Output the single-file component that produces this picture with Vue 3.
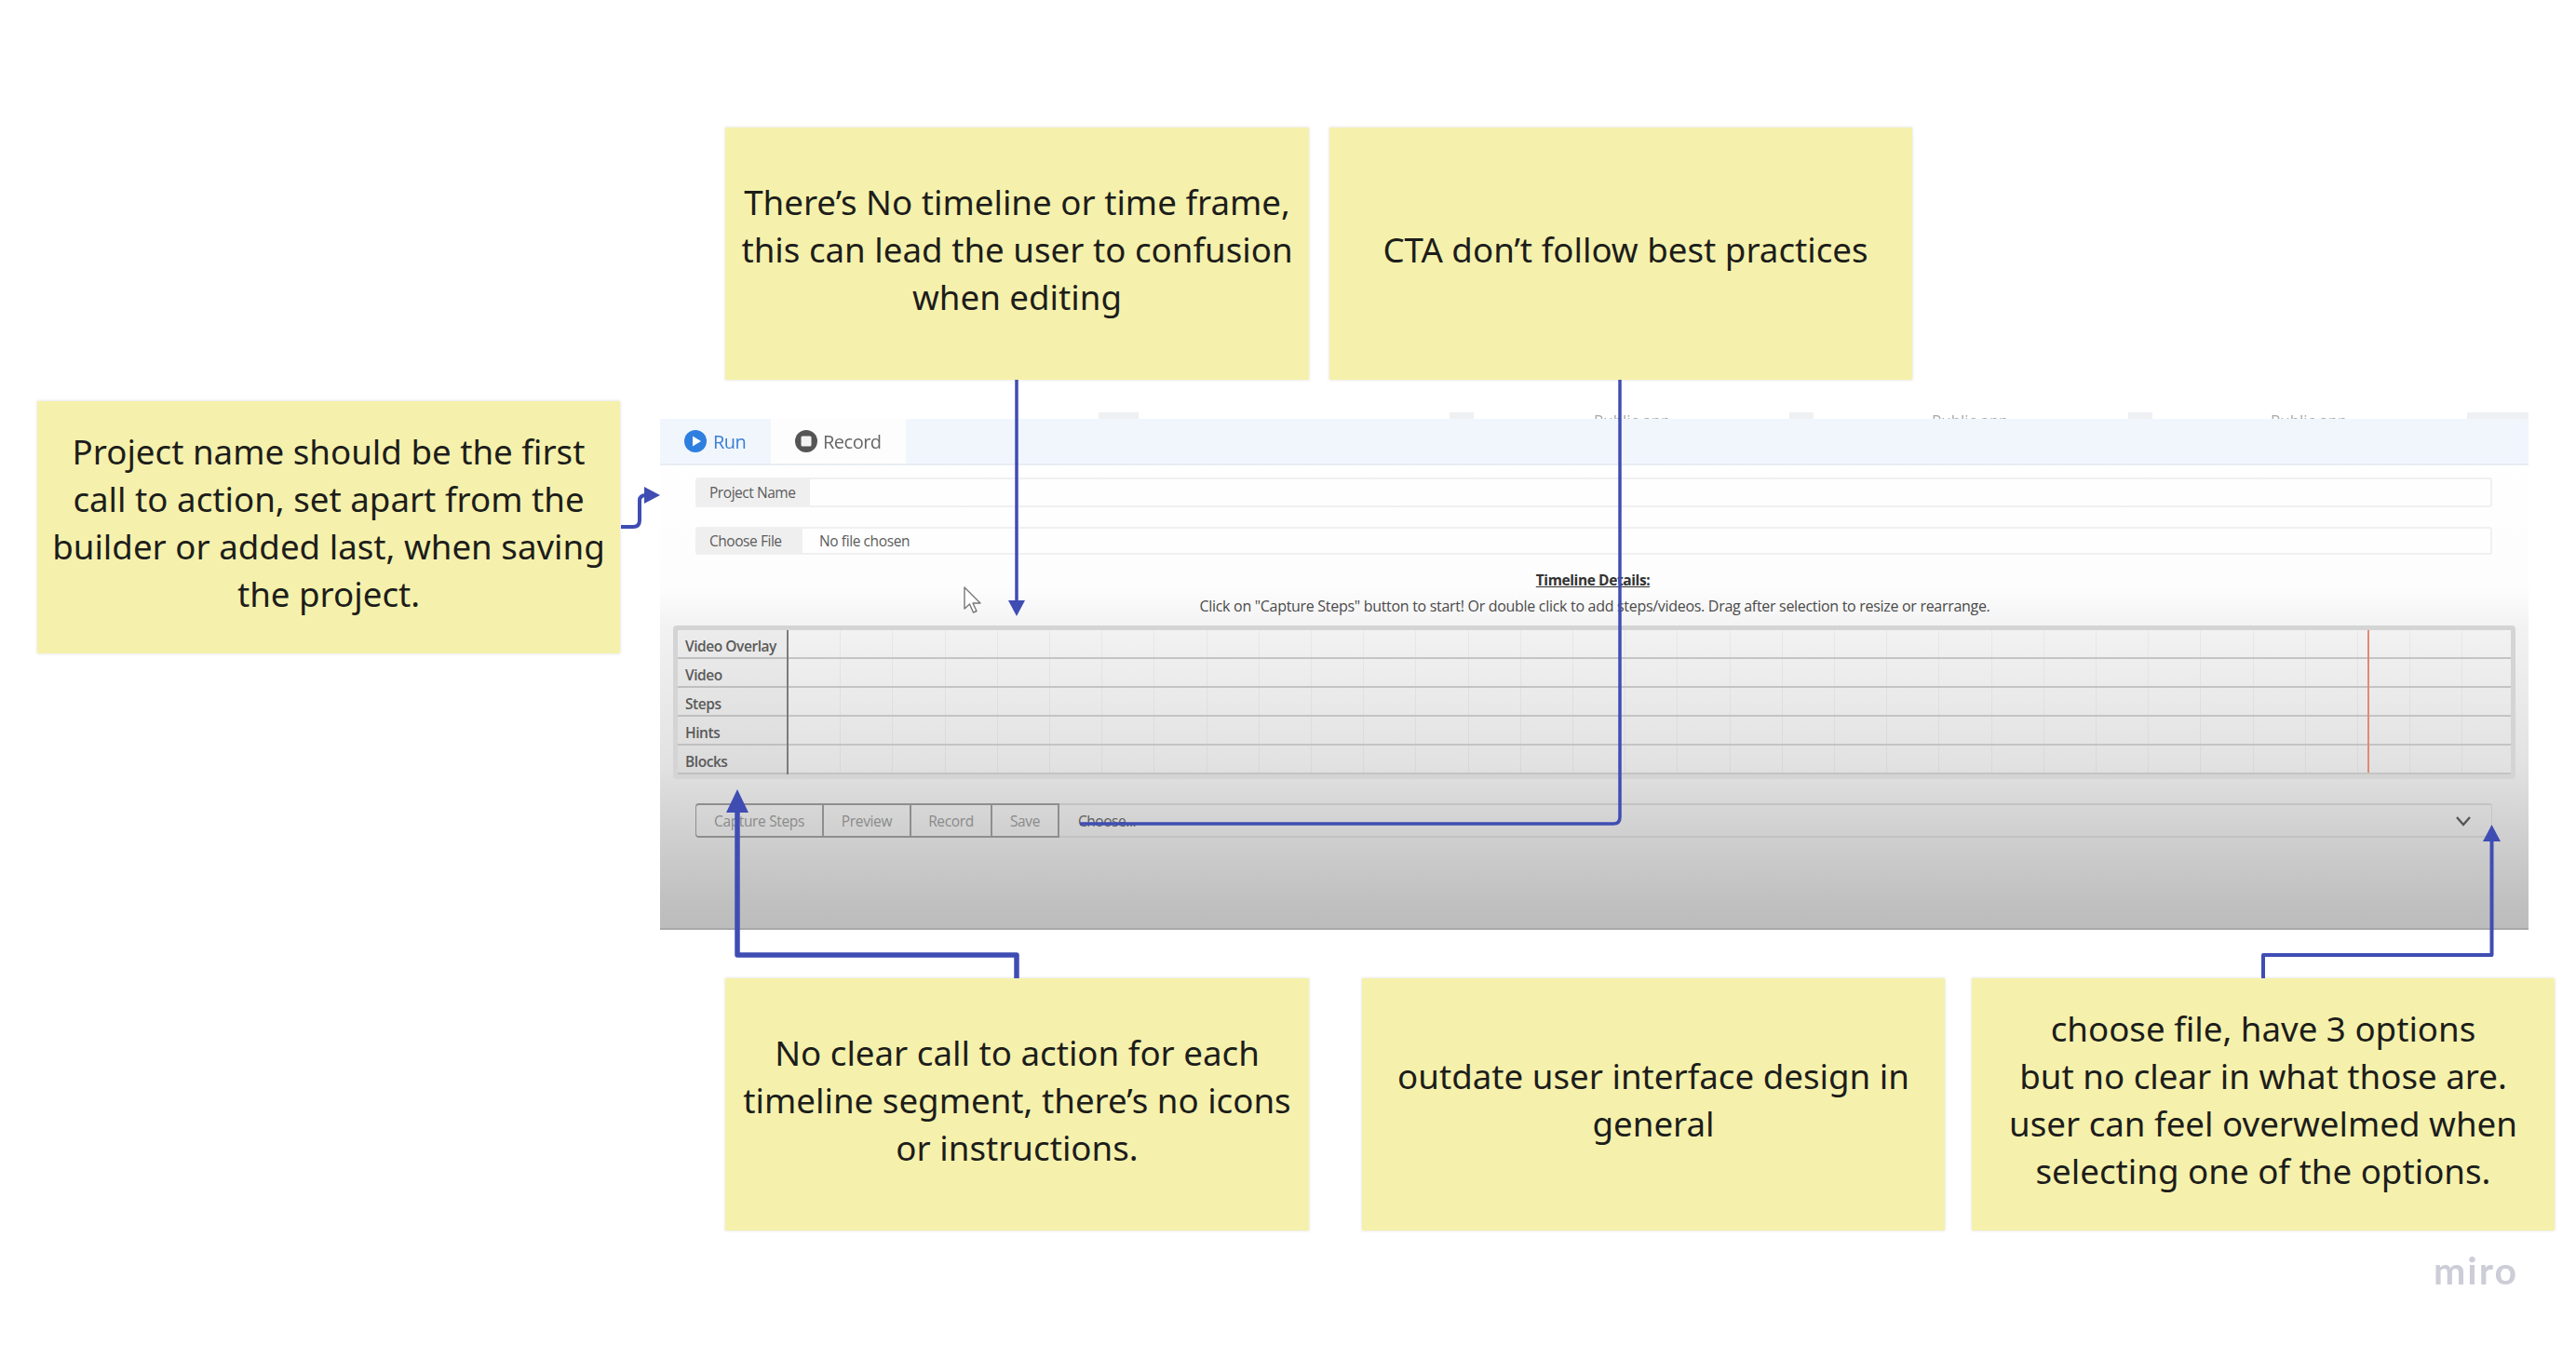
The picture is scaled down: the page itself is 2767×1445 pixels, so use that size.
<template>
  <div class="board">
    <div
      v-for="note in notes"
      :key="note.id"
      class="note"
      :style="{ left: note.x + 'px', top: note.y + 'px', width: note.w + 'px', height: note.h + 'px', paddingLeft: (note.shift || 0) + 'px' }"
    >
      <p>
        <template v-for="(line, i) in note.lines" :key="i">{{ line }}<br v-if="i < note.lines.length - 1" /></template>
      </p>
    </div>

    <section class="builder">
      <div class="ghost-strip">
        <span v-for="g in ghosts" :key="g.x" class="ghost-block" :style="{ left: g.x + 'px', width: g.w + 'px' }"></span>
        <span v-for="t in ghostLabels" :key="t" class="ghost-label" :style="{ left: t + 'px' }">Public app</span>
        <span class="ghost-block ghost-last"></span>
      </div>
      <div class="tabs">
        <div class="tab tab-run">
          <svg width="24" height="24" viewBox="0 0 24 24">
            <circle cx="12" cy="12" r="12" fill="#2f7fe0" />
            <path d="M9 6.5 L18 12 L9 17.5 Z" fill="#fff" />
          </svg>
          <span>Run</span>
        </div>
        <div class="tab tab-record">
          <svg width="24" height="24" viewBox="0 0 24 24">
            <circle cx="12" cy="12" r="12" fill="#555" />
            <rect x="6.5" y="6.5" width="11" height="11" rx="1.5" fill="#f4f4f4" />
          </svg>
          <span>Record</span>
        </div>
      </div>

      <div class="field field-name">
        <label class="addon addon-name">Project Name</label>
      </div>
      <div class="field field-file">
        <label class="addon addon-file">Choose File</label>
        <span class="file-text">No file chosen</span>
      </div>

      <h4 class="details-title">Timeline Details:</h4>
      <p class="details-hint">Click on "Capture Steps" button to start! Or double click to add steps/videos. Drag after selection to resize or rearrange.</p>

      <div class="timeline">
        <div v-for="row in rows" :key="row" class="tl-row">
          <div class="tl-label">{{ row }}</div>
          <div class="tl-track"></div>
        </div>
        <span class="playhead"></span>
      </div>

      <div class="toolbar">
        <button class="tool tool-first">Capture Steps</button>
        <button class="tool tool-preview">Preview</button>
        <button class="tool tool-record">Record</button>
        <button class="tool tool-save">Save</button>
        <span class="choose">Choose...</span>
        <svg class="chevron" width="18" height="12" viewBox="0 0 18 12">
          <path d="M2 2 L9 10 L16 2" fill="none" stroke="#555" stroke-width="2.4" />
        </svg>
      </div>
    </section>

    <!-- mouse pointer caught in the recording -->
    <svg class="pointer" width="22" height="30" viewBox="0 0 22 30">
      <path d="M2 1 L2 24 L7.5 19 L11.5 28 L15 26.5 L11 18 L19 18 Z" fill="#fff" stroke="#777" stroke-width="1.4" stroke-linejoin="round" />
    </svg>

    <!-- connectors between the notes and the screenshot -->
    <svg class="links" width="2767" height="1445" viewBox="0 0 2767 1445">
      <g fill="none" stroke="#3f4db3" stroke-linejoin="round">
        <path d="M1092 408 V648" stroke-width="3.5" />
        <path d="M1740 408 V878 Q1740 885 1733 885 H1160" stroke-width="3.5" />
        <path d="M1092 1051 V1026 H792 V870" stroke-width="5.5" />
        <path d="M2431 1051 V1026 H2676.5 V900" stroke-width="4" />
        <path d="M667 566 H680 Q687 566 687 559 V538 Q687 532 694 532" stroke-width="4" />
      </g>
      <g fill="#3f4db3">
        <path d="M1083 645 H1101 L1092 662 Z" />
        <path d="M780 873 H804 L792 848 Z" />
        <path d="M2667 904 H2686 L2676.5 886 Z" />
        <path d="M692 523 L709 532 L692 541 Z" />
      </g>
    </svg>

    <div class="miro">miro</div>
  </div>
</template>

<script setup>
const notes = [
  { id: 'timeline', x: 779, y: 137, w: 627, h: 271, lines: ['There’s No timeline or time frame,', 'this can lead the user to confusion', 'when editing'] },
  { id: 'cta', x: 1428, y: 137, w: 626, h: 271, shift: 10, lines: ['CTA don’t follow best practices'] },
  { id: 'project', x: 40, y: 431, w: 626, h: 271, lines: ['Project name should be the first', 'call to action, set apart from the', 'builder or added last, when saving', 'the project.'] },
  { id: 'segment', x: 779, y: 1051, w: 627, h: 271, lines: ['No clear call to action for each', 'timeline segment, there’s no icons', 'or instructions.'] },
  { id: 'outdate', x: 1463, y: 1051, w: 626, h: 271, lines: ['outdate user interface design in', 'general'] },
  { id: 'choose', x: 2118, y: 1051, w: 626, h: 271, lines: ['choose file, have 3 options', 'but no clear in what those are.', 'user can feel overwelmed when', 'selecting one of the options.'] }
]

const rows = ['Video Overlay', 'Video', 'Steps', 'Hints', 'Blocks']
const ghosts = [{ x: 471, w: 43 }, { x: 848, w: 26 }, { x: 1213, w: 26 }, { x: 1577, w: 26 }]
const ghostLabels = [1003, 1366, 1730]
</script>

<style>
html, body {
  margin: 0;
  background: #fff;
}
</style>

<style scoped>
.board {
  position: relative;
  width: 2767px;
  height: 1445px;
  overflow: hidden;
  background: #fff;
  font-family: "Open Sans", "Noto Sans", sans-serif;
}

.note {
  position: absolute;
  display: flex;
  align-items: center;
  justify-content: center;
  box-sizing: border-box;
  padding-bottom: 9px;
  background: #f5f1ac;
  box-shadow: 0 0 3px rgba(120, 120, 100, 0.25);
  color: #1d1d1b;
  text-align: center;
  font-family: "Noto Sans", "Open Sans", sans-serif;
  font-size: 36.7px;
  line-height: 51px;
}

.note p {
  margin: 0;
  white-space: nowrap;
}

.builder {
  position: absolute;
  left: 709px;
  top: 443px;
  width: 2007px;
  height: 556px;
  display: flex;
  flex-direction: column;
  background: linear-gradient(180deg, #ffffff 0, #fdfdfd 34%, #f2f2f2 42%, #e2e2e2 68%, #d2d2d2 80%, #c0c0c0 95%, #bcbcbc 100%);
  border-bottom: 2px solid #a8a8a8;
  box-sizing: border-box;
  color: #555;
  /* the reference is a soft video still */
  filter: blur(0.5px);
}

.ghost-strip {
  position: relative;
  height: 7px;
  flex: none;
  background: #fff;
}

.ghost-block {
  position: absolute;
  top: 0;
  height: 7px;
  background: #eef0f3;
}

.ghost-last {
  right: 0;
  width: 66px;
}

.ghost-label {
  position: absolute;
  top: -1px;
  font-size: 17px;
  line-height: 20px;
  color: #a8a8a8;
  white-space: nowrap;
}

.tabs {
  position: relative;
  display: flex;
  flex: none;
  height: 50px;
  background: #f1f6fd;
  border-bottom: 2px solid #e9edf2;
  box-sizing: border-box;
}

.tab {
  display: flex;
  align-items: center;
  box-sizing: border-box;
  font-size: 20px;
  letter-spacing: -0.5px;
  height: 48px;
}

.tab-run {
  width: 119px;
  padding-left: 26px;
  gap: 7px;
  color: #3a7fd5;
}

.tab-record {
  width: 145px;
  padding-left: 26px;
  gap: 6px;
  background: #fdfdfd;
  color: #666;
}

.field {
  display: flex;
  align-items: center;
  margin: 13px 39px 0 38px;
  background: #fefefe;
  border: 2px solid #f0f0f0;
  border-radius: 3px;
  box-sizing: border-box;
}

.field-name {
  height: 32px;
}

.field-file {
  height: 30px;
  margin-top: 21px;
}

.addon {
  display: flex;
  align-items: center;
  height: 100%;
  box-sizing: border-box;
  padding-left: 13px;
  background: #efefef;
  color: #5c5c5c;
  font-size: 15.5px;
  letter-spacing: -0.45px;
  white-space: nowrap;
}

.addon-name {
  width: 121px;
}

.addon-file {
  width: 113px;
}

.file-text {
  margin-left: 18px;
  color: #5c5c5c;
  font-size: 15.5px;
  letter-spacing: -0.4px;
}

.details-title {
  margin: 17px 0 0;
  height: 20px;
  text-align: center;
  width: 2004px;
  font-size: 15.5px;
  line-height: 20px;
  font-weight: 700;
  letter-spacing: -0.4px;
  color: #333;
  text-decoration: underline;
}

.details-hint {
  margin: 8px 0 0;
  height: 20px;
  width: 2008px;
  text-align: center;
  font-size: 16px;
  line-height: 20px;
  letter-spacing: -0.3px;
  color: #4a4a4a;
  white-space: nowrap;
}

.timeline {
  position: relative;
  flex: none;
  margin: 11px 0 0 14px;
  width: 1979px;
  height: 165px;
  box-sizing: border-box;
  border: 5px solid #d4d4d4;
  border-radius: 4px;
  display: flex;
  flex-direction: column;
}

.tl-row {
  display: flex;
  flex: 1;
  border-bottom: 2px solid #c4c4c4;
}

.tl-label {
  width: 119px;
  flex: none;
  padding: 3px 0 0 8px;
  box-sizing: border-box;
  border-right: 2px solid #7c7c7c;
  margin-bottom: -2px;
  display: flex;
  align-items: center;
  font-size: 15.5px;
  font-weight: 600;
  letter-spacing: -0.45px;
  color: #5a5a5a;
  white-space: nowrap;
  background: rgba(0, 0, 0, 0.025);
}

.tl-track {
  flex: 1;
  background-image: repeating-linear-gradient(90deg, transparent 0, transparent 55.2px, rgba(0, 0, 0, 0.045) 55.2px, rgba(0, 0, 0, 0.045) 56.2px);
}

.playhead {
  position: absolute;
  left: 1815px;
  top: 0;
  bottom: 2px;
  width: 2px;
  background: #e08a70;
}

.toolbar {
  display: flex;
  align-items: center;
  position: relative;
  flex: none;
  margin: 26px 39px 0 38px;
  height: 37px;
  box-sizing: border-box;
  border-top: 2px solid #c2c2c2;
  border-bottom: 2px solid #c2c2c2;
  border-right: 1px solid #c6c6c6;
  border-radius: 3px;
}

.tool {
  height: 37px;
  margin: -2px 0;
  padding: 0;
  box-sizing: border-box;
  background: transparent;
  border: 2px solid #8e8e8e;
  border-left: 0;
  font-family: inherit;
  font-size: 15.5px;
  letter-spacing: -0.35px;
  color: #8a8a8a;
}

.tool-first {
  width: 138px;
  border-left: 1px solid #8e8e8e;
  border-radius: 4px 0 0 4px;
}

.tool-preview {
  width: 94px;
}

.tool-record {
  width: 87px;
}

.tool-save {
  width: 72px;
}

.choose {
  margin-left: 20px;
  font-size: 15.5px;
  letter-spacing: -0.45px;
  color: #5c5c5c;
}

.chevron {
  margin-left: auto;
  margin-right: 21px;
}

.pointer {
  position: absolute;
  left: 1034px;
  top: 630px;
}

.links {
  position: absolute;
  left: 0;
  top: 0;
  pointer-events: none;
}

.miro {
  position: absolute;
  left: 2614px;
  top: 1340px;
  font-family: "Lato", "Open Sans", sans-serif;
  font-size: 41px;
  font-weight: 700;
  line-height: 50px;
  letter-spacing: 2px;
  color: #cdcdd8;
}
</style>
